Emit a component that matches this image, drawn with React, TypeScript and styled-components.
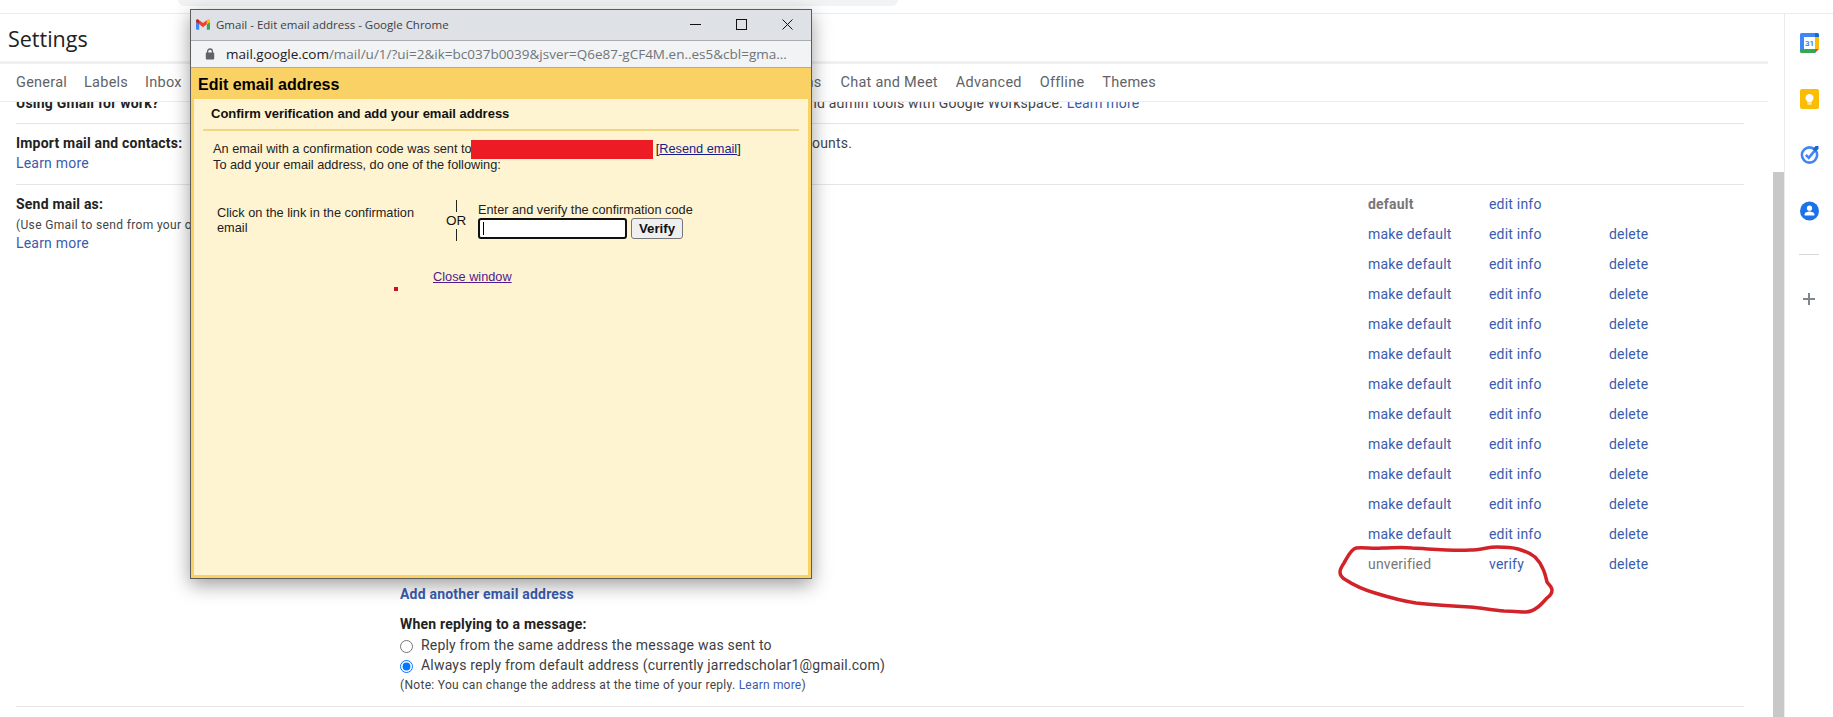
import React from "react";
import styled, { createGlobalStyle } from "styled-components";

const Global = createGlobalStyle`
  html, body { margin: 0; padding: 0; height: 717px; overflow: hidden; background: #fff; }
  body { font-family: Roboto, "Liberation Sans", sans-serif; font-size: 14px; color: #222; }
  #root { height: 717px; }
  * { box-sizing: border-box; }
`;

const Shell = styled.div`
  position: relative;
  width: 1833px;
  height: 717px;
  display: flex;
  flex-direction: column;
  overflow: hidden;
`;
const TopBar = styled.div`
  height: 14px;
  flex: none;
  padding-left: 178px;
  border-bottom: 1px solid #ececec;
`;
const SearchStub = styled.div`
  width: 720px;
  height: 6px;
  background: #f1f3f4;
  border-radius: 0 0 8px 8px;
`;
const Main = styled.div`
  flex: 1;
  min-height: 0;
  display: flex;
`;
const Content = styled.div`
  flex: 1;
  min-width: 0;
  display: flex;
  flex-direction: column;
`;
const TitleRow = styled.div`
  height: 47px;
  flex: none;
  margin-right: 16px;
  padding: 1px 0 0 8px;
  display: flex;
  align-items: center;
  font-family: "Open Sans", sans-serif;
  font-size: 21.5px;
  color: #202124;
`;
const Tabs = styled.nav`
  height: 41px;
  flex: none;
  margin-right: 16px;
  padding: 0 0 0 16px;
  display: flex;
  align-items: center;
  gap: 18px;
  border-top: 3px solid #f0f0f0;
  border-bottom: 1px solid #ececec;
`;
const LeadTabs = styled.div`
  display: flex;
  gap: 17px;
`;
const HiddenTabs = styled.div`
  display: flex;
  gap: 15px;
  margin-right: 1px;
`;
const Tab = styled.span`
  font-size: 14.5px;
  letter-spacing: 0.25px;
  color: #5f6368;
  white-space: nowrap;
`;
const Scroller = styled.div`
  flex: 1;
  min-height: 0;
  display: flex;
  overflow: hidden;
`;
const ScrollBody = styled.div`
  flex: 1;
  min-width: 0;
  padding: 0 29px 0 16px;
`;
const Track = styled.div`
  width: 11px;
  flex: none;
  padding-top: 70px;
`;
const Thumb = styled.div`
  height: 100%;
  background: #c8c8c8;
`;
const Section = styled.section<{ $pull?: boolean }>`
  display: grid;
  grid-template-columns: 384px 1fr;
  border-bottom: 1px solid #e6e6e6;
  margin-top: ${(p) => (p.$pull ? "-18px" : "0")};
`;
const Side = styled.div`
  padding-top: 10px;
`;
const Heading = styled.div`
  font-weight: 700;
  line-height: 18px;
  letter-spacing: 0.2px;
  color: #222;
  white-space: nowrap;
`;
const SmallNote = styled.div`
  font-size: 12px;
  line-height: 14px;
  margin: 5px 0 1px;
  letter-spacing: 0.35px;
  color: #444;
  white-space: nowrap;
`;
const Link = styled.a<{ $small?: boolean; $strong?: boolean }>`
  color: #3a5cad;
  font-size: ${(p) => (p.$small ? "12px" : "14px")};
  font-weight: ${(p) => (p.$strong ? 700 : 400)};
  letter-spacing: 0.2px;
  text-decoration: none;
`;
const SideLink = styled(Link)`
  display: block;
  line-height: 20px;
  margin-top: 1px;
`;
const Body = styled.div<{ $h?: number }>`
  padding-top: 10px;
  min-height: ${(p) => p.$h ?? 0}px;
  line-height: 18px;
  letter-spacing: 0.2px;
  color: #444;
  white-space: nowrap;
`;
const Accounts = styled.div`
  padding-top: 4px;
`;
const AccountRow = styled.div`
  height: 30px;
  display: grid;
  grid-template-columns: 1fr 121px 120px 135px;
  align-items: center;
`;
const Status = styled.span<{ $bold?: boolean }>`
  color: #777;
  font-weight: ${(p) => (p.$bold ? 700 : 400)};
  letter-spacing: 0.2px;
`;
const AddLink = styled.div`
  height: 18px;
  margin-top: 6px;
  line-height: 18px;
`;
const ReplyHeading = styled(Heading)`
  margin: 12px 0 2px;
`;
const RadioRow = styled.label`
  height: 20px;
  display: flex;
  align-items: center;
  gap: 8px;
  letter-spacing: 0.2px;
  color: #3c4043;
  white-space: nowrap;
`;
const Radio = styled.input`
  width: 13px;
  height: 13px;
  margin: 2px 0 0;
`;
const ReplyNote = styled.div`
  margin: 2px 0 12px;
  font-size: 12px;
  line-height: 17px;
  letter-spacing: 0.3px;
  color: #444;
`;
const Rail = styled.aside`
  width: 49px;
  flex: none;
  border-left: 1px solid #ececec;
  padding-top: 19px;
  display: flex;
  flex-direction: column;
  align-items: center;
`;
const RailSlot = styled.div`
  height: 56px;
  width: 100%;
  display: flex;
  justify-content: center;
`;
const RailRule = styled.div`
  width: 20px;
  height: 1px;
  background: #d8d8d8;
  margin: -3px 0 38px;
`;

/* popup */
const Popup = styled.div`
  position: absolute;
  left: 190px;
  top: 9px;
  width: 622px;
  height: 570px;
  display: flex;
  flex-direction: column;
  border: 1px solid #5c5c5c;
  box-shadow: 0 6px 18px rgba(0, 0, 0, 0.38);
  font-family: "Liberation Sans", Arial, sans-serif;
  color: #111;
`;
const TitleBar = styled.div`
  height: 31px;
  flex: none;
  padding: 0 18px 2px 5px;
  display: flex;
  align-items: center;
  background: #dee1e6;
  border-bottom: 1px solid #a9acb0;
`;
const WinTitle = styled.span`
  margin-left: 6px;
  flex: 1;
  font-family: "Open Sans", sans-serif;
  font-size: 11.5px;
  color: #3c4043;
  white-space: nowrap;
`;
const WinButtons = styled.div`
  display: flex;
  align-items: center;
  gap: 35px;
`;
const AddressBar = styled.div`
  height: 27px;
  flex: none;
  padding: 0 0 0 14px;
  display: flex;
  align-items: center;
  gap: 11px;
  background: #f1f3f4;
  border-bottom: 1px solid #a9acb0;
`;
const Url = styled.span`
  font-family: "Open Sans", sans-serif;
  font-size: 13.5px;
  color: #70757a;
  white-space: nowrap;
`;
const UrlHost = styled.span`
  color: #202124;
`;
const Page = styled.div`
  position: relative;
  flex: 1;
  min-height: 0;
  display: flex;
  flex-direction: column;
  background: #fff4d2;
  border: solid #fad165;
  border-width: 0 3px 3px 3px;
`;
const PageHeader = styled.h1`
  height: 31px;
  margin: 0 -3px;
  padding: 2px 0 0 7px;
  display: flex;
  align-items: center;
  background: #fad165;
  font-size: 16px;
  font-weight: 700;
  color: #000;
`;
const SubHead = styled.h2`
  height: 32px;
  margin: 0 9px;
  padding: 0 0 2px 8px;
  display: flex;
  align-items: center;
  border-bottom: 2px solid #f3d77f;
  font-size: 13px;
  font-weight: 700;
  color: #111;
`;
const Intro = styled.div`
  margin: 10px 0 0 19px;
  font-size: 12.75px;
  line-height: 15px;
  color: #222;
  white-space: nowrap;
`;
const Redaction = styled.span`
  display: inline-block;
  width: 182px;
  height: 19px;
  margin: -2px 3px -2px -1px;
  vertical-align: middle;
  background: #ed1c24;
`;
const ResendLink = styled.a`
  color: #1a1a8c;
  text-decoration: underline;
`;
const Choice = styled.div`
  margin: 27px 0 0 23px;
  height: 42px;
  display: flex;
  align-items: center;
  font-size: 12.75px;
  color: #222;
`;
const ClickText = styled.div`
  width: 224px;
  line-height: 15px;
`;
const OrColumn = styled.div`
  width: 30px;
  margin-right: 7px;
  display: flex;
  flex-direction: column;
  align-items: center;
  font-size: 13.5px;
  line-height: 17px;
  color: #111;
`;
const OrBar = styled.span`
  width: 1px;
  height: 12px;
  background: #222;
`;
const VerifyForm = styled.div`
  display: flex;
  flex-direction: column;
  line-height: 15px;
`;
const VerifyRow = styled.div`
  margin-top: 1px;
  display: flex;
  gap: 4px;
`;
const CodeWrap = styled.div`
  position: relative;
  &::after {
    content: "";
    position: absolute;
    left: 5px;
    top: 4px;
    width: 1px;
    height: 13px;
    background: #000;
  }
`;
const CodeInput = styled.input`
  display: block;
  width: 149px;
  height: 21px;
  padding: 0;
  background: #fff;
  border: 2px solid #101010;
  border-radius: 3px;
  outline: none;
`;
const VerifyButton = styled.button`
  width: 52px;
  height: 21px;
  padding: 0;
  background: #efefef;
  border: 1px solid #767676;
  border-radius: 3px;
  font-family: inherit;
  font-size: 13.3px;
  font-weight: 700;
  color: #111;
`;
const CloseRow = styled.div`
  margin: 28px 0 0 239px;
  font-size: 12.75px;
  line-height: 15px;
`;
const CloseLink = styled.a`
  color: #551a8b;
  text-decoration: underline;
`;
const Speck = styled.span`
  position: absolute;
  left: 200px;
  top: 219px;
  width: 4px;
  height: 4px;
  background: #c8102e;
`;
const Scribble = styled.svg`
  position: absolute;
  left: 0;
  top: 0;
  pointer-events: none;
`;

const GmailIcon = () => (
  <svg width="14" height="11" viewBox="0 0 256 193" aria-hidden>
    <path fill="#4285F4" d="M58.18 192.05V93.14L27.5 65.08 0 49.5v126.97c0 9.8 7.94 17.58 17.45 17.58z" />
    <path fill="#34A853" d="M197.82 192.05h40.73c9.8 0 17.45-8.06 17.45-17.45V49.5l-31.18 17.85-27 25.78z" />
    <path fill="#EA4335" d="M58.18 93.14l-4.17-38.65 4.17-36.99L128 69.82l69.82-52.37 4.67 34.99-4.67 40.69L128 145.5z" />
    <path fill="#FBBC04" d="M197.82 17.45v75.69L256 49.5V26.18c0-21.58-24.64-33.9-41.89-20.95z" />
    <path fill="#C5221F" d="M0 49.5l26.76 20.07 31.42 23.57V17.45L41.89 5.24C24.61-7.7 0 4.6 0 26.18z" />
  </svg>
);
const LockIcon = () => (
  <svg width="10" height="12" viewBox="0 0 10 12" aria-hidden>
    <path fill="none" stroke="#5f6368" strokeWidth="1.3" d="M2.6 5V3.4a2.4 2.4 0 0 1 4.8 0V5" />
    <rect x="0.8" y="4.6" width="8.4" height="7" rx="1" fill="#5f6368" />
  </svg>
);
const MinIcon = () => (
  <svg width="11" height="11" viewBox="0 0 11 11" aria-hidden>
    <path d="M0 5.5h11" stroke="#111" strokeWidth="1" />
  </svg>
);
const MaxIcon = () => (
  <svg width="11" height="11" viewBox="0 0 11 11" aria-hidden>
    <rect x="0.5" y="0.5" width="10" height="10" fill="none" stroke="#111" />
  </svg>
);
const CloseIcon = () => (
  <svg width="11" height="11" viewBox="0 0 11 11" aria-hidden>
    <path d="M0.5 0.5l10 10M10.5 0.5l-10 10" stroke="#111" strokeWidth="1" />
  </svg>
);
const CalendarIcon = () => (
  <svg width="19" height="20" viewBox="0 0 19 20" aria-hidden>
    <rect x="4" y="4" width="11" height="12" fill="#fff" />
    <path fill="#4285f4" d="M1.5 0H15v4H4v12H0V1.5A1.5 1.5 0 0 1 1.5 0z" />
    <path fill="#34a853" d="M0 16h15v4H1.5A1.5 1.5 0 0 1 0 18.5z" />
    <path fill="#fbbc04" d="M15 4h4v12h-4z" />
    <path fill="#1967d2" d="M15 0h2.5A1.5 1.5 0 0 1 19 1.5V4h-4z" />
    <path fill="#ea4335" d="M15 16h4l-4 4z" />
    <text x="9.5" y="13" textAnchor="middle" fontSize="8" fontWeight="500" fontFamily="Roboto, sans-serif" fill="#1a73e8">31</text>
  </svg>
);
const KeepIcon = () => (
  <svg width="19" height="20" viewBox="0 0 19 20" aria-hidden>
    <rect width="19" height="20" rx="2" fill="#fbbc04" />
    <path fill="#fff" d="M9.5 5a4 4 0 0 0-2.2 7.3V13.5h4.4v-1.2A4 4 0 0 0 9.5 5z" />
    <rect x="7.5" y="14.3" width="4" height="1.2" fill="#fff" />
  </svg>
);
const TasksIcon = () => (
  <svg width="19" height="19" viewBox="0 0 19 19" aria-hidden>
    <circle cx="9.5" cy="10" r="7.6" fill="none" stroke="#4285f4" strokeWidth="2.6" />
    <path d="M5.8 9.8l3 3 6.6-8" fill="none" stroke="#4285f4" strokeWidth="2.6" />
    <path d="M15.5 1h3v3l-3 2.5-2.6-2.6z" fill="#1967d2" />
  </svg>
);
const ContactsIcon = () => (
  <svg width="19" height="20" viewBox="0 0 19 20" aria-hidden>
    <circle cx="9.5" cy="10" r="9.5" fill="#1a73e8" />
    <circle cx="9.5" cy="7.2" r="2.6" fill="#fff" />
    <path fill="#fff" d="M4.6 13.2c0-1.9 3.2-2.8 4.9-2.8s4.9.9 4.9 2.8v1.4H4.6z" />
  </svg>
);
const PlusIcon = () => (
  <svg width="12" height="12" viewBox="0 0 12 12" aria-hidden>
    <path d="M6 0v12M0 6h12" stroke="#80868b" strokeWidth="2" />
  </svg>
);

type Row = { status: string; bold?: boolean; linked?: boolean; action: string; del: boolean };
const rows: Row[] = [
  { status: "default", bold: true, action: "edit info", del: false },
  ...Array.from({ length: 11 }, () => ({ status: "make default", linked: true, action: "edit info", del: true })),
  { status: "unverified", action: "verify", del: true },
];

export default function App() {
  return (
    <Shell>
      <Global />
      <TopBar>
        <SearchStub />
      </TopBar>
      <Main>
        <Content>
          <TitleRow>Settings</TitleRow>
          <Tabs>
            <LeadTabs>
              <Tab>General</Tab>
              <Tab>Labels</Tab>
              <Tab>Inbox</Tab>
            </LeadTabs>
            <HiddenTabs>
              <Tab>Accounts and Import</Tab>
              <Tab>Filters and Blocked Addresses</Tab>
              <Tab>Forwarding and POP/IMAP</Tab>
              <Tab>Add-ons</Tab>
            </HiddenTabs>
            <Tab>Chat and Meet</Tab>
            <Tab>Advanced</Tab>
            <Tab>Offline</Tab>
            <Tab>Themes</Tab>
          </Tabs>
          <Scroller>
            <ScrollBody>
              <Section $pull>
                <Side>
                  <Heading>Using Gmail for work?</Heading>
                </Side>
                <Body $h={39}>
                  Businesses get yourname@example.com email, more storage, and admin tools with Google Workspace. <Link>Learn more</Link>
                </Body>
              </Section>
              <Section>
                <Side>
                  <Heading>Import mail and contacts:</Heading>
                  <SideLink>Learn more</SideLink>
                </Side>
                <Body $h={60}>Import from Yahoo!, Outlook, AOL, or other webmail or POP3 accounts.</Body>
              </Section>
              <Section>
                <Side>
                  <Heading>Send mail as:</Heading>
                  <SmallNote>(Use Gmail to send from your other email addresses)</SmallNote>
                  <SideLink>Learn more</SideLink>
                </Side>
                <Accounts>
                  {rows.map((r, i) => (
                    <AccountRow key={i}>
                      <span />
                      {r.linked ? <Link>{r.status}</Link> : <Status $bold={r.bold}>{r.status}</Status>}
                      <Link>{r.action}</Link>
                      {r.del ? <Link>delete</Link> : <span />}
                    </AccountRow>
                  ))}
                  <AddLink>
                    <Link $strong>Add another email address</Link>
                  </AddLink>
                  <ReplyHeading>When replying to a message:</ReplyHeading>
                  <RadioRow>
                    <Radio type="radio" name="reply" />
                    Reply from the same address the message was sent to
                  </RadioRow>
                  <RadioRow>
                    <Radio type="radio" name="reply" defaultChecked />
                    Always reply from default address (currently jarredscholar1@gmail.com)
                  </RadioRow>
                  <ReplyNote>
                    (Note: You can change the address at the time of your reply. <Link $small>Learn more</Link>)
                  </ReplyNote>
                </Accounts>
              </Section>
            </ScrollBody>
            <Track>
              <Thumb />
            </Track>
          </Scroller>
        </Content>
        <Rail>
          <RailSlot><CalendarIcon /></RailSlot>
          <RailSlot><KeepIcon /></RailSlot>
          <RailSlot><TasksIcon /></RailSlot>
          <RailSlot><ContactsIcon /></RailSlot>
          <RailRule />
          <PlusIcon />
        </Rail>
      </Main>

      <Scribble width="1833" height="717" viewBox="0 0 1833 717" aria-hidden>
        <path
          fill="none"
          stroke="#d2232a"
          strokeWidth="3.5"
          strokeLinejoin="round"
          d="M1356 548C1364 547 1372 549 1382 548C1392 548 1402 547 1412 548C1432 549 1452 551 1470 550C1480 550 1488 547 1497 547C1504 547 1511 547 1518 549C1525 551 1530 553 1535 557C1539 561 1541 564 1543 569C1545 573 1546 578 1547 582C1549 585 1552 587 1552 590C1552 594 1550 596 1547 598C1544 601 1542 604 1538 607C1534 610 1531 612 1526 612C1519 612 1511 611 1504 611C1492 610 1482 608 1470 607C1452 606 1434 605 1416 603C1402 601 1388 597 1375 593C1365 590 1355 586 1346 580C1342 578 1340 575 1340 572C1340 569 1342 566 1344 563C1347 558 1351 549 1356 548Z"
        />
      </Scribble>

      <Popup>
        <TitleBar>
          <GmailIcon />
          <WinTitle>Gmail - Edit email address - Google Chrome</WinTitle>
          <WinButtons>
            <MinIcon />
            <MaxIcon />
            <CloseIcon />
          </WinButtons>
        </TitleBar>
        <AddressBar>
          <LockIcon />
          <Url>
            <UrlHost>mail.google.com</UrlHost>/mail/u/1/?ui=2&amp;ik=bc037b0039&amp;jsver=Q6e87-gCF4M.en..es5&amp;cbl=gma...
          </Url>
        </AddressBar>
        <Page>
          <PageHeader>Edit email address</PageHeader>
          <SubHead>Confirm verification and add your email address</SubHead>
          <Intro>
            An email with a confirmation code was sent to
            <Redaction />
            [<ResendLink>Resend email</ResendLink>]
            <br />
            To add your email address, do one of the following:
          </Intro>
          <Choice>
            <ClickText>Click on the link in the confirmation email</ClickText>
            <OrColumn>
              <OrBar />
              OR
              <OrBar />
            </OrColumn>
            <VerifyForm>
              Enter and verify the confirmation code
              <VerifyRow>
                <CodeWrap>
                  <CodeInput aria-label="Confirmation code" />
                </CodeWrap>
                <VerifyButton>Verify</VerifyButton>
              </VerifyRow>
            </VerifyForm>
          </Choice>
          <CloseRow>
            <CloseLink>Close window</CloseLink>
          </CloseRow>
          <Speck />
        </Page>
      </Popup>
    </Shell>
  );
}
